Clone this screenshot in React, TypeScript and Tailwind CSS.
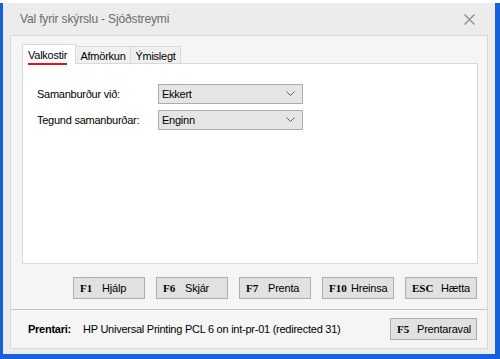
import React from "react";

const font = { fontFamily: '"Liberation Sans", Arial, sans-serif' };

function KeyButton({ k, label, keyW = "w-[22px]", className = "" }: { k: string; label: string; keyW?: string; className?: string }) {
  return (
    <div
      className={`flex h-[22px] items-center border border-[#adadad] bg-[#e1e1e1] pl-[6px] text-[11px] tracking-[-0.2px] text-black ${className}`}
    >
      <span
        className={`${keyW} text-[11px] font-bold tracking-normal`}
        style={{ fontFamily: '"Liberation Serif", "Times New Roman", serif' }}
      >
        {k}
      </span>
      <span>{label}</span>
    </div>
  );
}

function Select({ value }: { value: string }) {
  return (
    <div className="flex h-[20px] w-[145px] items-center justify-between border border-[#acacac] bg-[#e5e5e5] pl-[3px] pr-[7px] text-[11px] text-black">
      <span>{value}</span>
      <svg width="9" height="6" viewBox="0 0 9 6" fill="none">
        <path d="M0.5 0.5 L4.5 4.5 L8.5 0.5" stroke="#606060" strokeWidth="1" />
      </svg>
    </div>
  );
}

export default function App() {
  const buttons = [
    { k: "F1", label: "Hjálp" },
    { k: "F6", label: "Skjár" },
    { k: "F7", label: "Prenta" },
    { k: "F10", label: "Hreinsa" },
    { k: "ESC", label: "Hætta" },
  ];

  return (
    <div className="h-[359px] w-[500px] bg-[#1762d8]" style={font}>
      <div className="ml-[3px] mt-[3px] flex h-[351px] w-[492px] flex-col bg-[#ececec]">
        {/* title bar */}
        <div className="flex h-[32px] items-center justify-between pl-[17px] pr-[20px]">
          <span className="text-[12px] tracking-[-0.15px] text-[#6b6b6b]">Val fyrir skýrslu - Sjóðstreymi</span>
          <svg width="11" height="11" viewBox="0 0 11 11">
            <path d="M0.5 0.5 L10.5 10.5 M10.5 0.5 L0.5 10.5" stroke="#8a8a8a" strokeWidth="1.2" />
          </svg>
        </div>

        {/* inner box */}
        <div className="mx-[7px] flex flex-col border border-[#d8d8d8] bg-[#f5f5f5] pb-[8px] pt-[8px] tracking-[-0.25px]">
          <div className="pl-[11px] pr-[9px]">
            {/* tabs */}
            <div className="flex items-end text-[11px] text-black">
              <div className="relative z-10 -mb-px flex h-[20px] w-[54px] items-start border border-b-0 border-[#d9d9d9] bg-white pl-[5px] pt-[2px]">
                <span className="relative">
                  Valkostir
                  <span className="absolute -bottom-[1px] left-0 h-[2px] w-full bg-[#e8101a]" />
                </span>
              </div>
              <div className="flex h-[17px] w-[55px] items-start justify-center border border-b-0 border-l-0 border-[#d9d9d9] bg-[#f0f0f0] pt-[1px]">
                Afmörkun
              </div>
              <div className="flex h-[17px] w-[50px] items-start justify-center border border-b-0 border-l-0 border-[#d9d9d9] bg-[#f0f0f0] pt-[1px]">
                Ýmislegt
              </div>
            </div>
            {/* panel */}
            <div className="flex h-[201px] flex-col gap-[6px] border border-[#d9d9d9] bg-white pl-[14px] pt-[20px] text-[11px] text-black">
              <div className="flex items-center">
                <span className="w-[121px]">Samanburður við:</span>
                <Select value="Ekkert" />
              </div>
              <div className="flex items-center">
                <span className="w-[121px]">Tegund samanburðar:</span>
                <Select value="Enginn" />
              </div>
            </div>
          </div>

          {/* buttons */}
          <div className="mt-[13px] flex justify-end gap-[11px] pr-[10px]">
            {buttons.map((b) => (
              <KeyButton key={b.k} k={b.k} label={b.label} keyW={b.k === "ESC" ? "w-[29px]" : "w-[22px]"} className="w-[72px]" />
            ))}
          </div>

          <div className="mt-[10px] h-px bg-[#c4c4c4]" />

          <div className="mt-[8px] flex items-center justify-between pl-[17px] pr-[10px] text-[11px] text-black">
            <div className="flex items-center">
              <span className="w-[55px] font-bold">Prentari:</span>
              <span>HP Universal Printing PCL 6 on int-pr-01 (redirected 31)</span>
            </div>
            <KeyButton k="F5" label="Prentaraval" className="w-[87px] gap-0" keyW="w-[20px]" />
          </div>
        </div>
      </div>
    </div>
  );
}
